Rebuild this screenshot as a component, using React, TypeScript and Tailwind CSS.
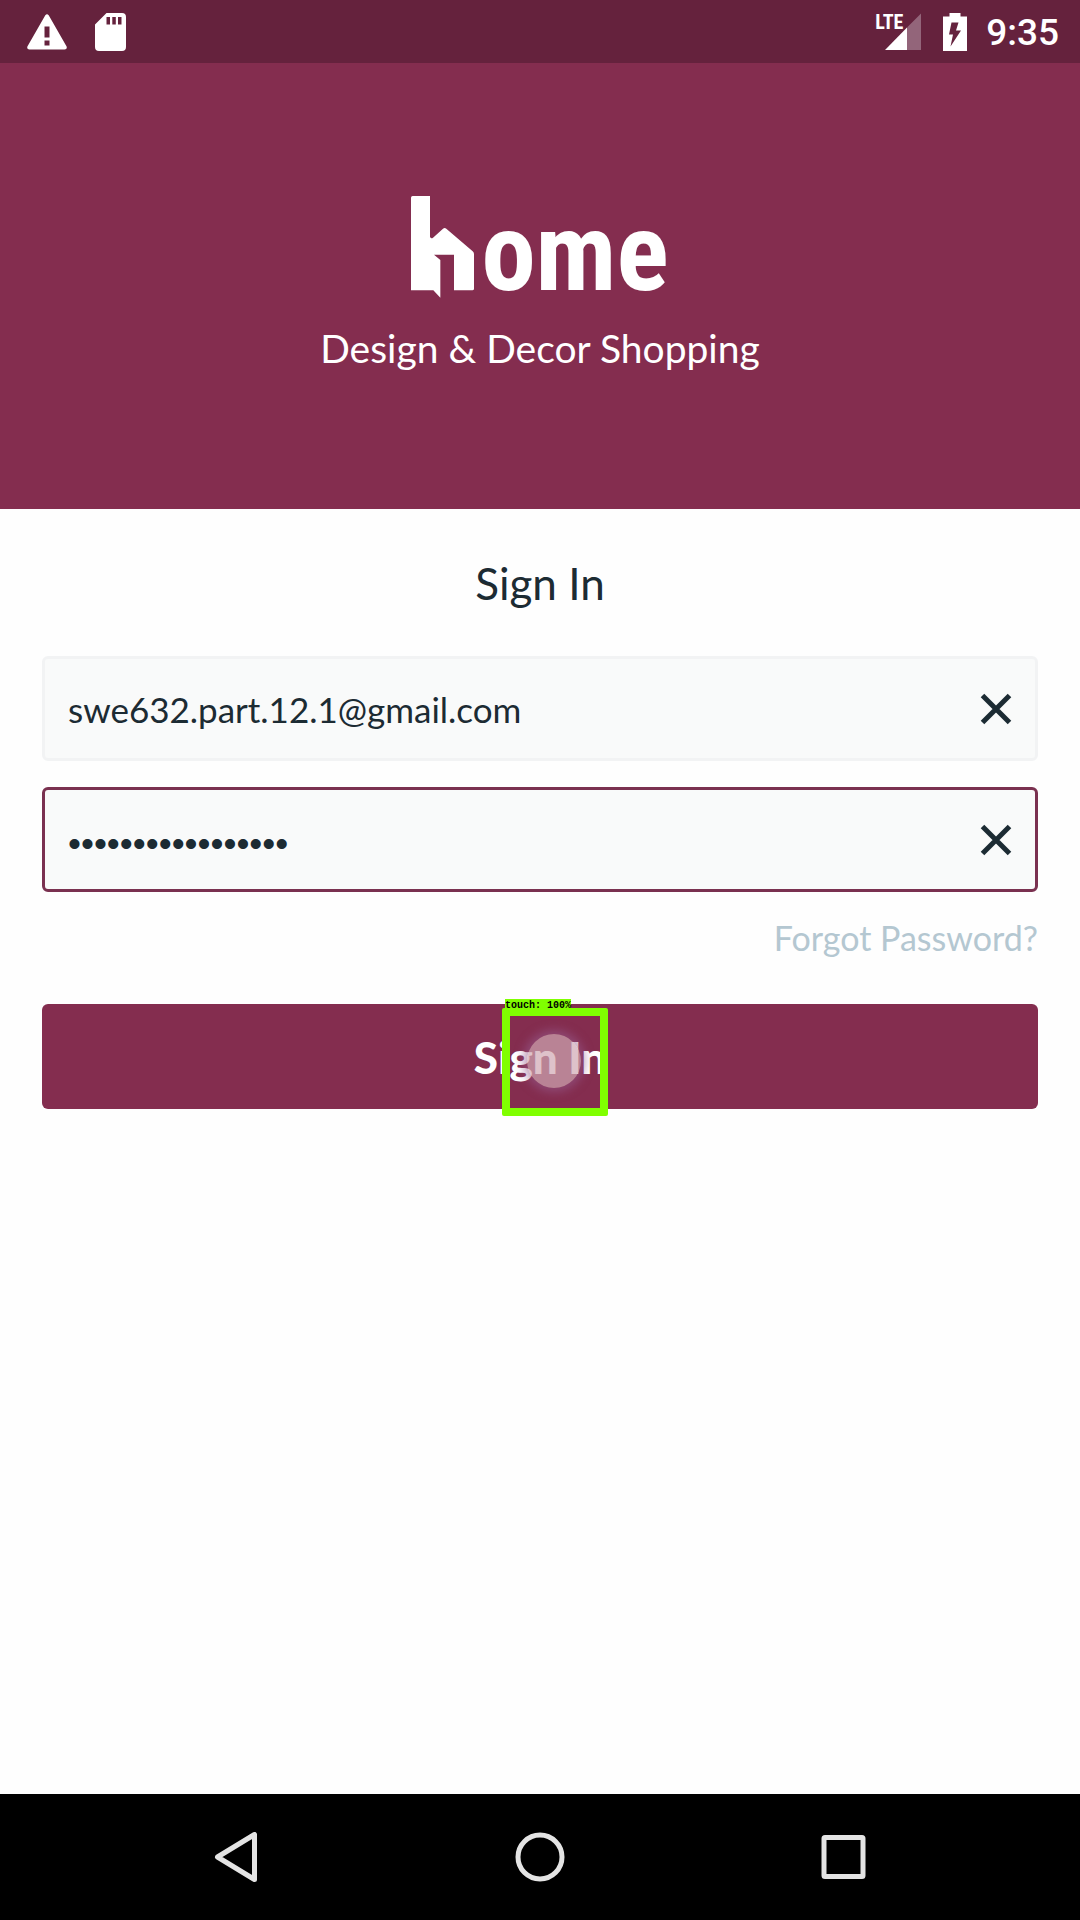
import { useState } from "react";

const SANS = "font-['Lato','Open_Sans',sans-serif]";

function StatusBar() {
  return (
    <div className="flex h-[63px] items-center justify-between bg-[#65223d] pl-[27px] pr-[21px] text-white">
      <div className="flex items-center gap-7">
        <svg width="40" height="36" viewBox="0 0 40 36" aria-label="Warning">
          <path
            fill="currentColor"
            fillRule="evenodd"
            d="M18.3 1.2Q20 -.8 21.7 1.2L39.6 32.6Q40.4 35.4 37.6 35.6H2.4Q-.4 35.4.4 32.6ZM17.5 12.5V23.5H22.5V12.5ZM17.5 26.5V31.5H22.5V26.5Z"
          />
        </svg>
        <svg width="31" height="38" viewBox="0 0 31 38" aria-label="SD card">
          <path
            fill="currentColor"
            fillRule="evenodd"
            d="M11.5 0H27Q31 0 31 4V34Q31 38 27 38H4Q0 38 0 34V11.5ZM11.5 4V11.5H15V4ZM17.3 4V11.5H20.8V4ZM23 4V11.5H26.5V4Z"
          />
        </svg>
      </div>
      <div className="flex items-center">
        <div className="relative mr-[22px] h-[38px] w-[45px]">
          <svg className="absolute right-0 top-0" width="36" height="38" viewBox="0 0 36 38" aria-label="Signal">
            <path fill="#93657a" d="M22 14.5 36 .5V37H22Z" />
            <path fill="currentColor" d="M0 37 22 14.5V37Z" />
          </svg>
          <span className="absolute left-[-1px] top-0 font-['Roboto_Condensed','Roboto',sans-serif] text-[20px] font-bold leading-[18px]">
            LTE
          </span>
        </div>
        <svg className="mr-[19px]" width="24" height="38" viewBox="0 0 24 38" aria-label="Battery charging">
          <path
            fill="currentColor"
            fillRule="evenodd"
            d="M6.5 0H17.5V3.5H24V38H0V3.5H6.5ZM8.5 9.5 6 21.5H10L7.5 33.5 18 17.5H13L15.5 9.5Z"
          />
        </svg>
        <span className="pt-[3px] font-['Roboto',sans-serif] text-[37px] font-medium leading-10">9:35</span>
      </div>
    </div>
  );
}

function Logo() {
  return (
    <div className="flex h-[102px] items-start justify-center text-white" aria-label="home">
      <svg width="64" height="102" viewBox="0 0 192 306" aria-hidden="true">
        <path
          fill="currentColor"
          d="M5 0H57V122Q60 130 66 125L96 98Q101 94 106 98L185 166Q189 169 189 174V278Q189 283 184 283H129V176H69L88 192V305L67 283H0V5Q0 0 5 0Z"
        />
      </svg>
      <span className="ml-[6px] pt-[6px] font-['Roboto_Condensed','Roboto',sans-serif] text-[109px] font-bold leading-[102px]">
        ome
      </span>
    </div>
  );
}

function ClearIcon() {
  return (
    <svg width="32" height="32" viewBox="0 0 32 32" aria-hidden="true">
      <path d="M2.5 2.5 29.5 29.5M29.5 2.5 2.5 29.5" stroke="currentColor" strokeWidth="5" />
    </svg>
  );
}

type FieldProps = {
  id: string;
  label: string;
  type: string;
  box: string;
  text: string;
  value: string;
  onChange: (value: string) => void;
};

function Field({ id, label, type, box, text, value, onChange }: FieldProps) {
  return (
    <div className={`flex h-[105px] items-center rounded-md border-[3px] bg-[#f9fafa] pl-[23px] pr-[23px] ${box}`}>
      <input
        id={id}
        type={type}
        aria-label={label}
        value={value}
        onChange={(e) => onChange(e.target.value)}
        className={`h-full min-w-0 flex-1 bg-transparent outline-none ${text}`}
      />
      <button type="button" aria-label={`Clear ${label}`} onClick={() => onChange("")}>
        <ClearIcon />
      </button>
    </div>
  );
}

export default function App() {
  const [email, setEmail] = useState("swe632.part.12.1@gmail.com");
  const [password, setPassword] = useState("abcdefghijklmnopq");

  return (
    <div className={`flex min-h-screen flex-col bg-[#fefefe] text-[#1c2b33] ${SANS}`}>
      <StatusBar />
      <header className="flex h-[446px] flex-col items-center bg-[#842d4f] pt-[133px] text-white">
        <Logo />
        <p className="mt-[26px] text-[39px] leading-12">Design &amp; Decor Shopping</p>
      </header>

      <main className="flex flex-1 flex-col px-[42px] pt-[46px]">
        <h1 className="text-center text-[44px] leading-14">Sign In</h1>
        <form className="mt-[45px] flex flex-col" onSubmit={(e) => e.preventDefault()}>
          <div className="flex flex-col gap-[26px]">
            <Field
              id="email"
              label="Email"
              type="email"
              box="border-[#f2f3f4]"
              text="text-[35px]"
              value={email}
              onChange={setEmail}
            />
            <Field
              id="password"
              label="Password"
              type="password"
              box="border-[#7a3150]"
              text="pt-2 font-['Liberation_Sans',sans-serif] text-[37px]"
              value={password}
              onChange={setPassword}
            />
          </div>
          <a href="#forgot" className="mt-[22px] self-end text-[34px] leading-12 text-[#b4c7d1]">
            Forgot Password?
          </a>
          <div className="relative mt-[42px]">
            <button type="submit" className="h-[105px] w-full rounded-md bg-[#842d4f] text-[44px] font-black text-white">
              Sign In
            </button>
            <div className="pointer-events-none absolute left-1/2 top-1 ml-[-38px] h-[108px] w-[106px] rounded-xs border-8 border-[#80ff00]">
              <span className="absolute left-[-5px] top-[-17px] h-3 bg-[#80ff00] font-['Liberation_Mono',monospace] text-[10px] font-bold leading-[14px] text-black">
                touch: 100%
              </span>
              <span className="absolute left-[17px] top-[18px] size-[54px] rounded-full bg-[#d0a8b4]/70 shadow-[0_0_10px_4px_rgba(150,90,140,0.6)]" />
            </div>
          </div>
        </form>
      </main>

      <nav className="flex h-[126px] items-center justify-between bg-black pl-[212px] pr-[212px] text-[#e4e4e4]">
        <button type="button" aria-label="Back">
          <svg width="50" height="50" viewBox="0 0 50 50" fill="none" stroke="currentColor" strokeWidth="5" strokeLinejoin="round">
            <path d="M42.5 2.5V47.5L5.5 25Z" />
          </svg>
        </button>
        <button type="button" aria-label="Home">
          <svg width="50" height="50" viewBox="0 0 50 50" fill="none" stroke="currentColor" strokeWidth="5">
            <circle cx="25" cy="25" r="22" />
          </svg>
        </button>
        <button type="button" aria-label="Recent apps">
          <svg width="50" height="50" viewBox="0 0 50 50" fill="none" stroke="currentColor" strokeWidth="5" strokeLinejoin="round">
            <rect x="6" y="5.5" width="39" height="39" rx="1" />
          </svg>
        </button>
      </nav>
    </div>
  );
}
